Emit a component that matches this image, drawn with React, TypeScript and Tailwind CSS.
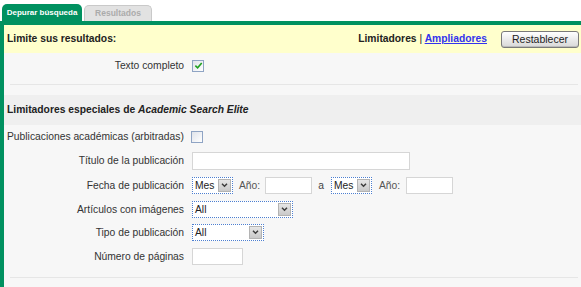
import React from 'react';

const GREEN = 'bg-[#009160]';

function Checkbox({ checked }: { checked?: boolean }) {
  return (
    <span className="flex h-[12px] w-[12px] items-center justify-center border border-[#8fa4c4] bg-gradient-to-br from-[#dfe3ea] to-white">
      {checked && (
        <svg viewBox="0 0 10 10" className="h-[9px] w-[9px]">
          <path d="M1.5 5.2 L4 7.6 L8.6 2.2" fill="none" stroke="#21a121" strokeWidth="1.8" />
        </svg>
      )}
    </span>
  );
}

function Select({ value, width, className = '' }: { value: string; width: string; className?: string }) {
  return (
    <span className={`flex h-[17px] items-stretch border border-dotted border-[#4d7fd0] bg-white ${width} ${className}`}>
      <span className="flex-1 pl-[2px] text-[10.3px] leading-[15px] text-[#222]">{value}</span>
      <span className="m-[1px] flex w-[13px] items-center justify-center border border-[#b3b3b3] bg-gradient-to-b from-[#e6e6e6] to-[#c9c9c9]">
        <svg viewBox="0 0 8 6" className="h-[5px] w-[7px]">
          <path d="M1 1 L4 4 L7 1" fill="none" stroke="#3b3b3b" strokeWidth="1.7" />
        </svg>
      </span>
    </span>
  );
}

function Input({ width, height = 'h-[17px]', className = '' }: { width: string; height?: string; className?: string }) {
  return <span className={`block border border-[#d6d6d6] bg-white ${width} ${height} ${className}`} />;
}

function Row({ label, children, className = '' }: { label: string; children: React.ReactNode; className?: string }) {
  return (
    <div className={`flex items-center ${className}`}>
      <div className="w-[180px] shrink-0 text-right text-[10.3px] text-[#333]">{label}</div>
      <div className="ml-[8px] flex items-center">{children}</div>
    </div>
  );
}

export default function App() {
  return (
    <div className="h-[287px] w-[581px] overflow-hidden bg-white font-['Liberation_Sans',Arial,sans-serif]">
      {/* tabs */}
      <div className="flex h-[21px] items-end gap-[2px] pl-[2px]">
        <div className={`${GREEN} flex h-[17px] w-[80px] items-center justify-center rounded-t-[5px] text-[8px] font-bold text-white`}>
          Depurar búsqueda
        </div>
        <div className="flex h-[16px] w-[68px] items-center justify-center rounded-t-[5px] border border-b-0 border-[#c9c9c9] bg-[#e2e2e2] text-[8.5px] font-bold text-[#ababab]">
          Resultados
        </div>
      </div>

      <div className="h-[266px] border-l-4 border-t-4 border-[#009160] bg-[#f7f7f7]">
        {/* header */}
        <div className="flex h-[28px] items-center justify-between bg-[#ffffcc] pl-[3px] pr-[2px]">
          <span className="text-[10.3px] font-bold text-[#222]">Limite sus resultados:</span>
          <div className="flex items-center">
            <span className="text-[10.3px] font-bold text-[#222]">
              Limitadores <span className="font-normal">|</span>{' '}
              <a href="#" className="text-[#3333ee] underline">Ampliadores</a>
            </span>
            <button className="ml-[14px] h-[17px] w-[78px] rounded-[3px] border border-[#7a7a7a] bg-gradient-to-b from-white to-[#d8d8d8] text-[10.5px] text-[#222] shadow-[inset_0_-1px_0_#bbb]">
              Restablecer
            </button>
          </div>
        </div>

        <Row label="Texto completo" className="mt-[6px] h-[13px]">
          <Checkbox checked />
        </Row>

        <div className="ml-[6px] mr-[3px] mt-[12px] h-px bg-[#e6e6e6]" />

        <div className="mt-[10px] flex h-[30px] items-center bg-[#efefef] pl-[3px] text-[10.3px] font-bold text-[#222]">
          Limitadores especiales de&nbsp;<i>Academic Search Elite</i>
        </div>

        <div className="mt-[5px] flex h-[13px] items-center">
          <div className="w-[180px] shrink-0 pl-[3px] text-[10.3px] text-[#333]">
            Publicaciones académicas (arbitradas)
          </div>
          <div className="ml-[7px]">
            <Checkbox />
          </div>
        </div>

        <Row label="Título de la publicación" className="mt-[9px] h-[18px]">
          <Input width="w-[218px]" height="h-[18px]" />
        </Row>

        <Row label="Fecha de publicación" className="mt-[7px] h-[17px]">
          <Select value="Mes" width="w-[41px]" />
          <span className="ml-[6px] text-[10.3px] text-[#555]">Año:</span>
          <Input width="w-[47px]" className="ml-[5px]" />
          <span className="ml-[6px] text-[10.3px] text-[#444]">a</span>
          <Select value="Mes" width="w-[41px]" className="ml-[7px]" />
          <span className="ml-[7px] text-[10.3px] text-[#555]">Año:</span>
          <Input width="w-[47px]" className="ml-[6px]" />
        </Row>

        <Row label="Artículos con imágenes" className="mt-[7px] h-[17px]">
          <Select value="All" width="w-[101px]" />
        </Row>

        <Row label="Tipo de publicación" className="mt-[6px] h-[17px]">
          <Select value="All" width="w-[72px]" />
        </Row>

        <Row label="Número de páginas" className="mt-[7px] h-[17px]">
          <Input width="w-[51px]" />
        </Row>

        <div className="ml-[6px] mr-[3px] mt-[12px] h-px bg-[#e6e6e6]" />
      </div>
    </div>
  );
}
